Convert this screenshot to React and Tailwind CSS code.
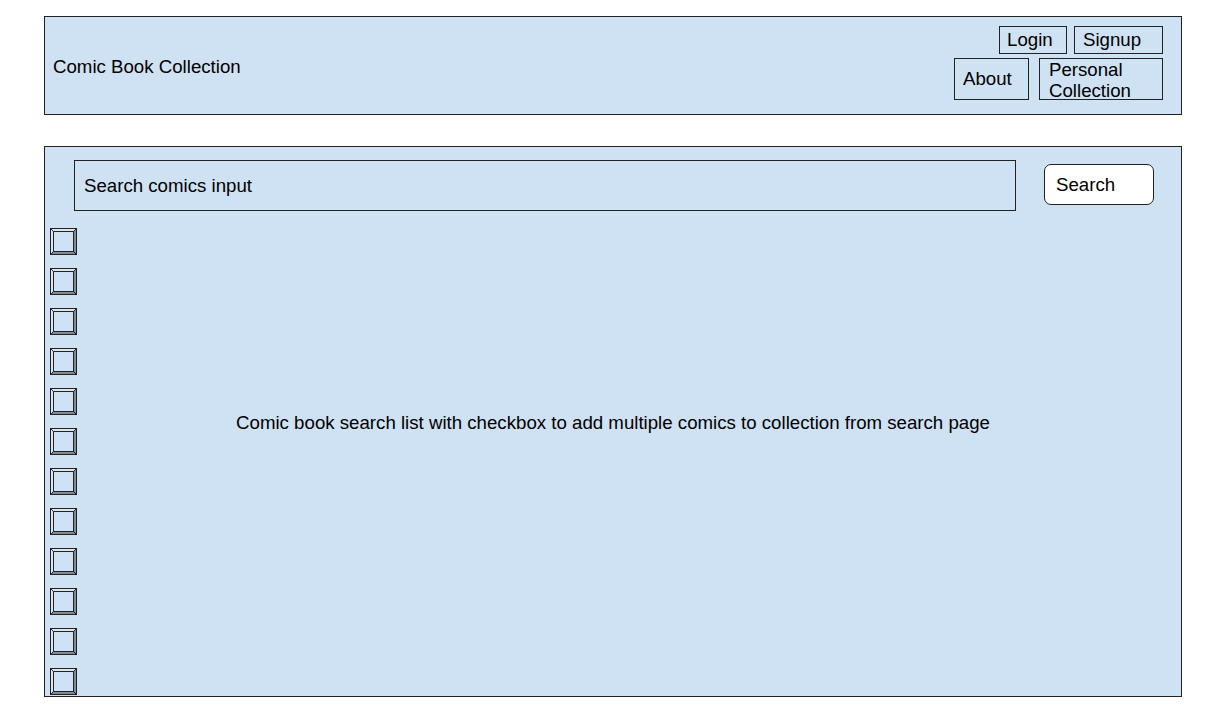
const font = { fontFamily: '"Liberation Sans", Arial, sans-serif' };

const Checkbox = () => (
  <svg width="27" height="27" viewBox="0 0 27 27" className="block">
    <rect x="0.5" y="0.5" width="26" height="26" fill="#cfe2f3" stroke="#222" />
    <polygon points="1,1 26,1 22,4 4,4 4,22 1,26" fill="#dfe6ed" />
    <polygon points="26,1 26,26 1,26 4,23 23,23 23,4" fill="#7e8a96" />
    <rect x="3.5" y="3.5" width="20" height="20" fill="#cfe2f3" stroke="#222" />
    <line x1="1" y1="1" x2="4" y2="4" stroke="#222" />
    <line x1="26" y1="1" x2="23" y2="4" stroke="#222" />
    <line x1="1" y1="26" x2="4" y2="23" stroke="#222" />
    <line x1="26" y1="26" x2="23" y2="23" stroke="#222" />
  </svg>
);

export default function App() {
  return (
    <div className="min-h-[720px] w-[1209px] bg-white pt-[16px] text-black" style={font}>
      {/* header */}
      <div className="ml-[44px] flex h-[99px] w-[1138px] items-center justify-between border border-[#222] bg-[#cfe2f3] pl-[8px] pr-[18px]">
        <div className="pt-[2px] text-[18.67px]">Comic Book Collection</div>
        <div className="mt-[9px] flex flex-col items-end gap-[4px] self-start">
          <div className="flex gap-[7px]">
            <div className="flex h-[28px] w-[68px] items-center border border-[#222] pl-[7px] text-[18.67px]">Login</div>
            <div className="flex h-[28px] w-[89px] items-center border border-[#222] pl-[8px] text-[18.67px]">Signup</div>
          </div>
          <div className="flex gap-[10px]">
            <div className="flex h-[42px] w-[75px] items-center border border-[#222] pl-[8px] text-[18.67px]">About</div>
            <div className="flex h-[42px] w-[124px] flex-col justify-center border border-[#222] pl-[9px] pt-[2px] text-[18.67px] leading-[21px]">
              <span>Personal</span>
              <span>Collection</span>
            </div>
          </div>
        </div>
      </div>

      {/* main */}
      <div className="ml-[44px] mt-[31px] grid h-[551px] w-[1138px] border border-[#222] bg-[#cfe2f3]">
        <div className="col-start-1 row-start-1">
          <div className="flex items-start pl-[29px] pt-[13px]">
            <div className="flex h-[51px] w-[942px] items-center border border-[#222] pl-[9px] text-[18.67px]">Search comics input</div>
            <div className="ml-[28px] mt-[4px] flex h-[41px] w-[110px] items-center rounded-[7px] border border-[#222] bg-white pl-[11px] text-[18.67px]">Search</div>
          </div>
          <div className="flex flex-col gap-[13px] pl-[5px] pt-[17px]">
            {Array.from({ length: 12 }).map((_, i) => (
              <Checkbox key={i} />
            ))}
          </div>
        </div>
        <div className="col-start-1 row-start-1 flex items-center justify-center pt-[2px] text-[18.67px]">
          Comic book search list with checkbox to add multiple comics to collection from search page
        </div>
      </div>
    </div>
  );
}
